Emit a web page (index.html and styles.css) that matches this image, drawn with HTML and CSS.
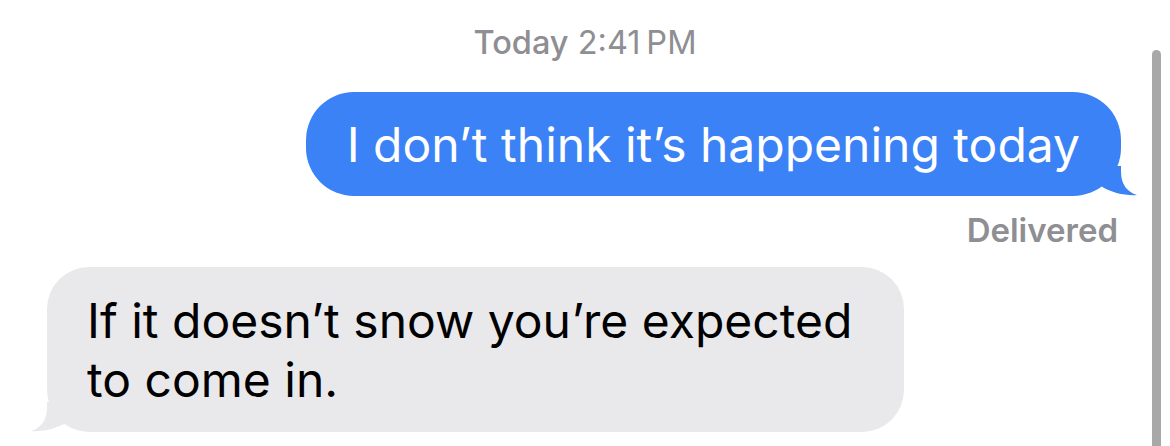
FILE: index.html
```html
<!DOCTYPE html>
<html lang="en">
<head>
<meta charset="utf-8">
<title>Messages</title>
<link rel="stylesheet" href="styles.css">
</head>
<body>
<div class="thread">
  <div class="timestamp"><span class="day">Today</span> 2:41&#8201;PM</div>
  <div class="row row-out">
    <div class="bubble bubble-out">I don’t think it’s happening today
      <svg class="tail tail-out" width="40" height="30" viewBox="0 0 40 30"><path d="M24 0 L24 6 C24 18 30 26 40 29 C30 30 14 27 4 20 L0 18 L0 0 Z"/></svg>
    </div>
  </div>
  <div class="status">Delivered</div>
  <div class="row row-in">
    <div class="bubble bubble-in">If it doesn’t snow you’re expected<br>to come in.
      <svg class="tail tail-in" width="40" height="30" viewBox="0 0 40 30"><path d="M24 0 L24 6 C24 18 30 26 40 29 C30 30 14 27 4 20 L0 18 L0 0 Z"/></svg>
    </div>
  </div>
</div>
<div class="scrollbar"></div>
</body>
</html>
```
FILE: styles.css
```css
html, body {
  margin: 0;
  padding: 0;
  background: #ffffff;
}
body {
  font-family: Inter, "Liberation Sans", sans-serif;
  width: 1170px;
  height: 446px;
  overflow: hidden;
  position: relative;
}
.thread {
  display: flex;
  flex-direction: column;
  padding: 25px 49px 0 47px;
}
.timestamp {
  text-align: center;
  font-size: 32.5px;
  line-height: 36px;
  color: #8e8e93;
  padding-left: 2px;
}
.timestamp .day {
  font-weight: 500;
}
.row {
  display: flex;
}
.row-out {
  justify-content: flex-end;
  margin-top: 31px;
}
.row-in {
  justify-content: flex-start;
  margin-top: 19px;
}
.bubble {
  position: relative;
  font-size: 48px;
  line-height: 59px;
  border-radius: 48px;
}
.bubble-out {
  background: #3a82f6;
  color: #ffffff;
  padding: 23px 41px 22px 41px;
}
.bubble-in {
  background: #e9e9eb;
  color: #000000;
  padding: 24px 52px 23px 40px;
  border-radius: 42px;
}
.tail {
  position: absolute;
  bottom: 0;
}
.tail-out {
  right: -16px;
  fill: #3a82f6;
}
.tail-in {
  left: -16px;
  fill: #e9e9eb;
  transform: scaleX(-1);
}
.status {
  text-align: right;
  font-size: 33px;
  line-height: 36px;
  font-weight: 600;
  color: #8e8e93;
  margin-top: 16px;
  padding-right: 3px;
}
.scrollbar {
  position: absolute;
  left: 1152px;
  top: 50px;
  width: 9px;
  height: 396px;
  border-radius: 5px 5px 0 0;
  background: #a8a8a8;
}
```
